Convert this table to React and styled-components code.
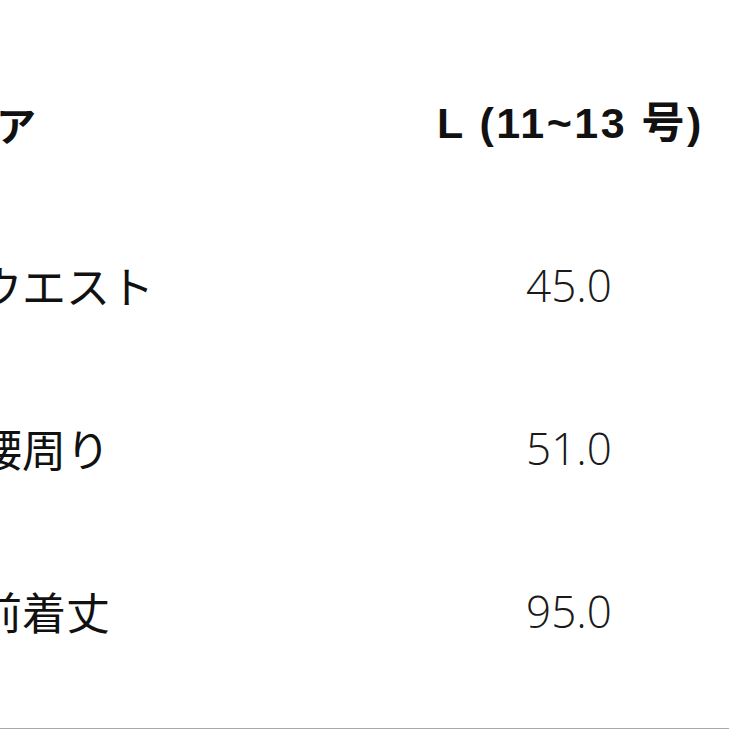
import styled, { createGlobalStyle } from "styled-components";

const GlobalStyle = createGlobalStyle`
  html, body {
    margin: 0;
    padding: 0;
    background: #fff;
    overflow: hidden;
  }
`;

const Page = styled.div`
  width: 729px;
  height: 729px;
  box-sizing: border-box;
  padding-top: 44px;
  border-bottom: 1px solid #a9a9a9;
  overflow: hidden;
  background: #fff;
`;

const Table = styled.div`
  display: flex;
  flex-direction: column;
  margin-left: -22px;
`;

const Row = styled.div`
  display: grid;
  grid-template-columns: 462px 258px;
  align-items: center;
  height: ${(p) => p.$height}px;
`;

const Label = styled.div`
  font-family: "Noto Sans CJK JP", sans-serif;
  font-size: ${(p) => (p.$head ? 40 : 44)}px;
  font-weight: ${(p) => (p.$head ? 700 : 400)};
  margin-left: ${(p) => p.$indent || 0}px;
  color: #111;
  white-space: nowrap;
  line-height: 1;
`;

const Value = styled.div`
  font-family: "Open Sans", "Liberation Sans", sans-serif;
  font-size: 44px;
  font-weight: 300;
  color: #1a1a1a;
  text-align: center;
  white-space: nowrap;
  line-height: 1;
`;

const HeadValue = styled.div`
  font-family: "Liberation Sans", "Noto Sans CJK JP", sans-serif;
  font-size: 43px;
  font-weight: 700;
  letter-spacing: 2.5px;
  color: #111;
  text-align: center;
  white-space: nowrap;
  line-height: 1;
  margin-left: -3px;
`;

const rows = [
  { label: "ウエスト", value: "45.0" },
  { label: "腰周り", value: "51.0" },
  { label: "前着丈", value: "95.0" },
];

export default function App() {
  return (
    <>
      <GlobalStyle />
      <Page>
        <Table>
          <Row $height={159}>
            <Label $head $indent={18}>ア</Label>
            <HeadValue>L (11~13 号)</HeadValue>
          </Row>
          {rows.map((r) => (
            <Row key={r.label} $height={163}>
              <Label>{r.label}</Label>
              <Value>{r.value}</Value>
            </Row>
          ))}
        </Table>
      </Page>
    </>
  );
}
